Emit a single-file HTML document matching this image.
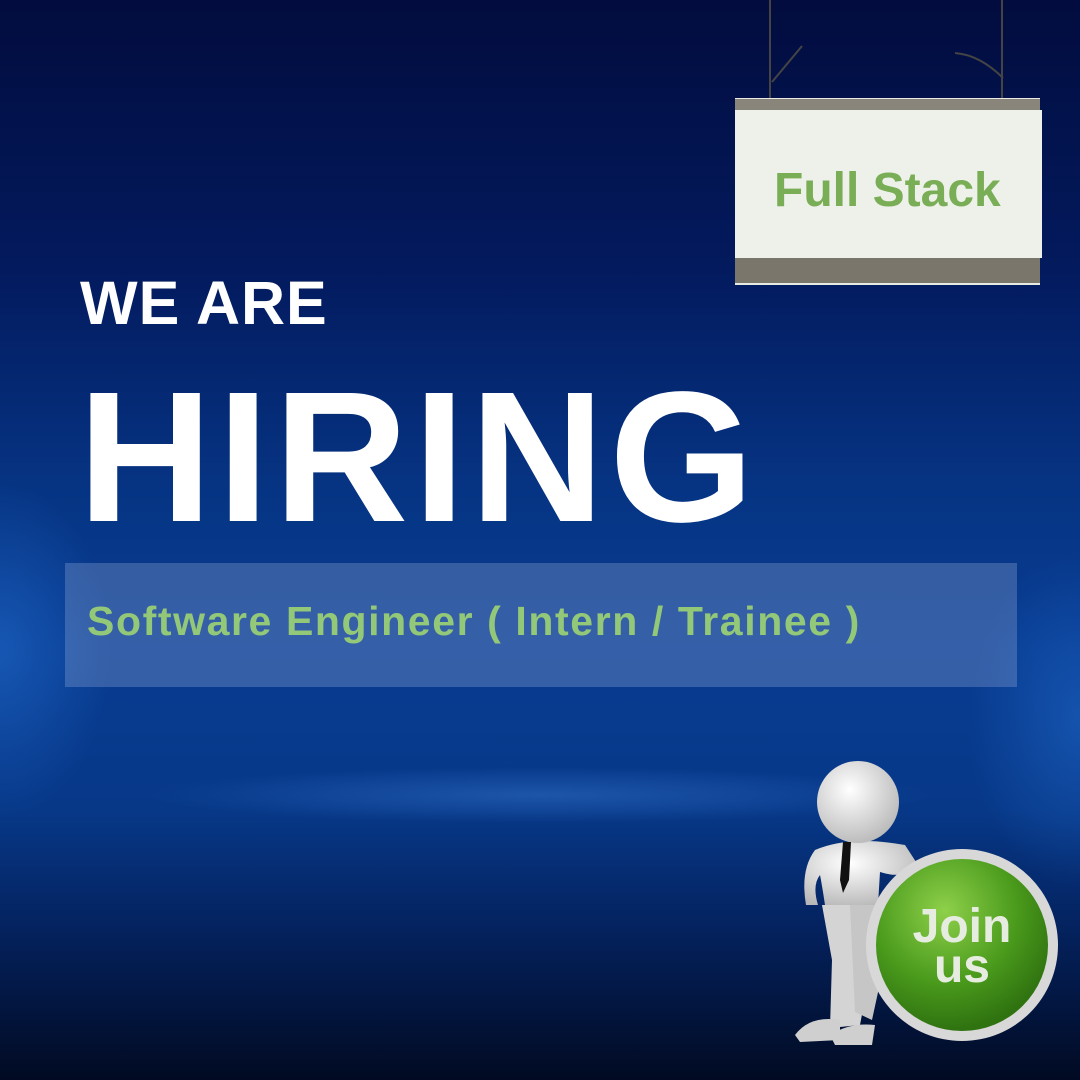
<!DOCTYPE html>
<html><head><style>
body{margin:0;width:1080px;height:1080px;overflow:hidden;font-family:"Liberation Sans",sans-serif;}
.bg{position:absolute;inset:0;background:
radial-gradient(ellipse 560px 40px at 50% 795px,rgba(70,140,230,.35),transparent 70%),
radial-gradient(ellipse 160px 240px at 0px 650px,rgba(40,120,220,.45),transparent 70%),
radial-gradient(ellipse 160px 240px at 1080px 720px,rgba(40,120,220,.4),transparent 70%),
linear-gradient(180deg,#020c3e 0%,#031a5e 25%,#063483 45%,#083c92 60%,#073888 75%,#04225e 86%,#010a22 100%);}
.t{position:absolute;color:#fff;font-weight:bold;}
</style></head><body>
<div class="bg"></div>
<div class="t" style="left:80px;top:268px;font-size:61px;letter-spacing:1px">WE ARE</div>
<div class="t" style="left:78px;top:365px;font-size:186px;letter-spacing:5px;line-height:1">HIRING</div>
<div style="position:absolute;left:65px;top:563px;width:952px;height:124px;background:rgba(150,170,215,.32)"></div>
<div style="position:absolute;left:87px;top:598px;font-size:41px;font-weight:bold;color:#93c878;letter-spacing:1.6px">Software Engineer ( Intern / Trainee )</div>
<svg style="position:absolute;left:0;top:0" width="1080" height="1080">
<line x1="770" y1="0" x2="770" y2="138" stroke="#444" stroke-width="2"/>
<line x1="1002" y1="0" x2="1002" y2="134" stroke="#444" stroke-width="2"/>
<path d="M772 82 L802 46 M1003 78 Q980 55 955 53" stroke="#444" stroke-width="2" fill="none"/>
<rect x="735" y="98" width="305" height="187" fill="#e8ebe4"/>
<rect x="735" y="99" width="305" height="12" fill="#8a857a"/>
<rect x="735" y="258" width="305" height="25" fill="#7a766b"/>
<rect x="735" y="110" width="307" height="148" fill="#eef1ea"/>
<text x="774" y="206" font-family="Liberation Sans" font-weight="bold" font-size="48" fill="#7aae56">Full Stack</text>
<defs>
<radialGradient id="g" cx="40%" cy="30%" r="70%"><stop offset="0" stop-color="#8ed04a"/><stop offset=".6" stop-color="#4a9a1c"/><stop offset="1" stop-color="#2f7210"/></radialGradient>
<radialGradient id="w" cx="40%" cy="35%" r="70%"><stop offset="0" stop-color="#fff"/><stop offset="1" stop-color="#b8b8b8"/></radialGradient>
</defs>
<path d="M815 850 Q850 835 905 845 L918 865 Q905 880 880 872 L878 905 L825 905 Q822 885 820 875 Q812 885 818 905 L806 905 Q800 870 815 850Z" fill="url(#w)"/>
<path d="M822 905 L880 905 L872 960 L860 1025 L830 1028 L832 960Z" fill="#d4d4d4"/>
<path d="M850 905 L880 905 L885 960 L872 1020 L855 1012Z" fill="#c6c6c6"/>
<path d="M795 1035 Q810 1015 840 1020 L840 1040 L800 1042Z M830 1035 Q850 1022 875 1025 L872 1045 L835 1045Z" fill="#cfcfcf"/>
<circle cx="962" cy="945" r="96" fill="#d8d8d8"/>
<circle cx="962" cy="945" r="86" fill="url(#g)"/>
<text x="962" y="942" text-anchor="middle" font-family="Liberation Sans" font-weight="bold" font-size="48" fill="#e6ece0">Join</text>
<text x="962" y="982" text-anchor="middle" font-family="Liberation Sans" font-weight="bold" font-size="48" fill="#e6ece0">us</text>
<circle cx="858" cy="802" r="41" fill="url(#w)"/>
<path d="M843 842 L851 842 L849 880 L843 893 L840 880Z" fill="#111"/>
</svg>
</body></html>
